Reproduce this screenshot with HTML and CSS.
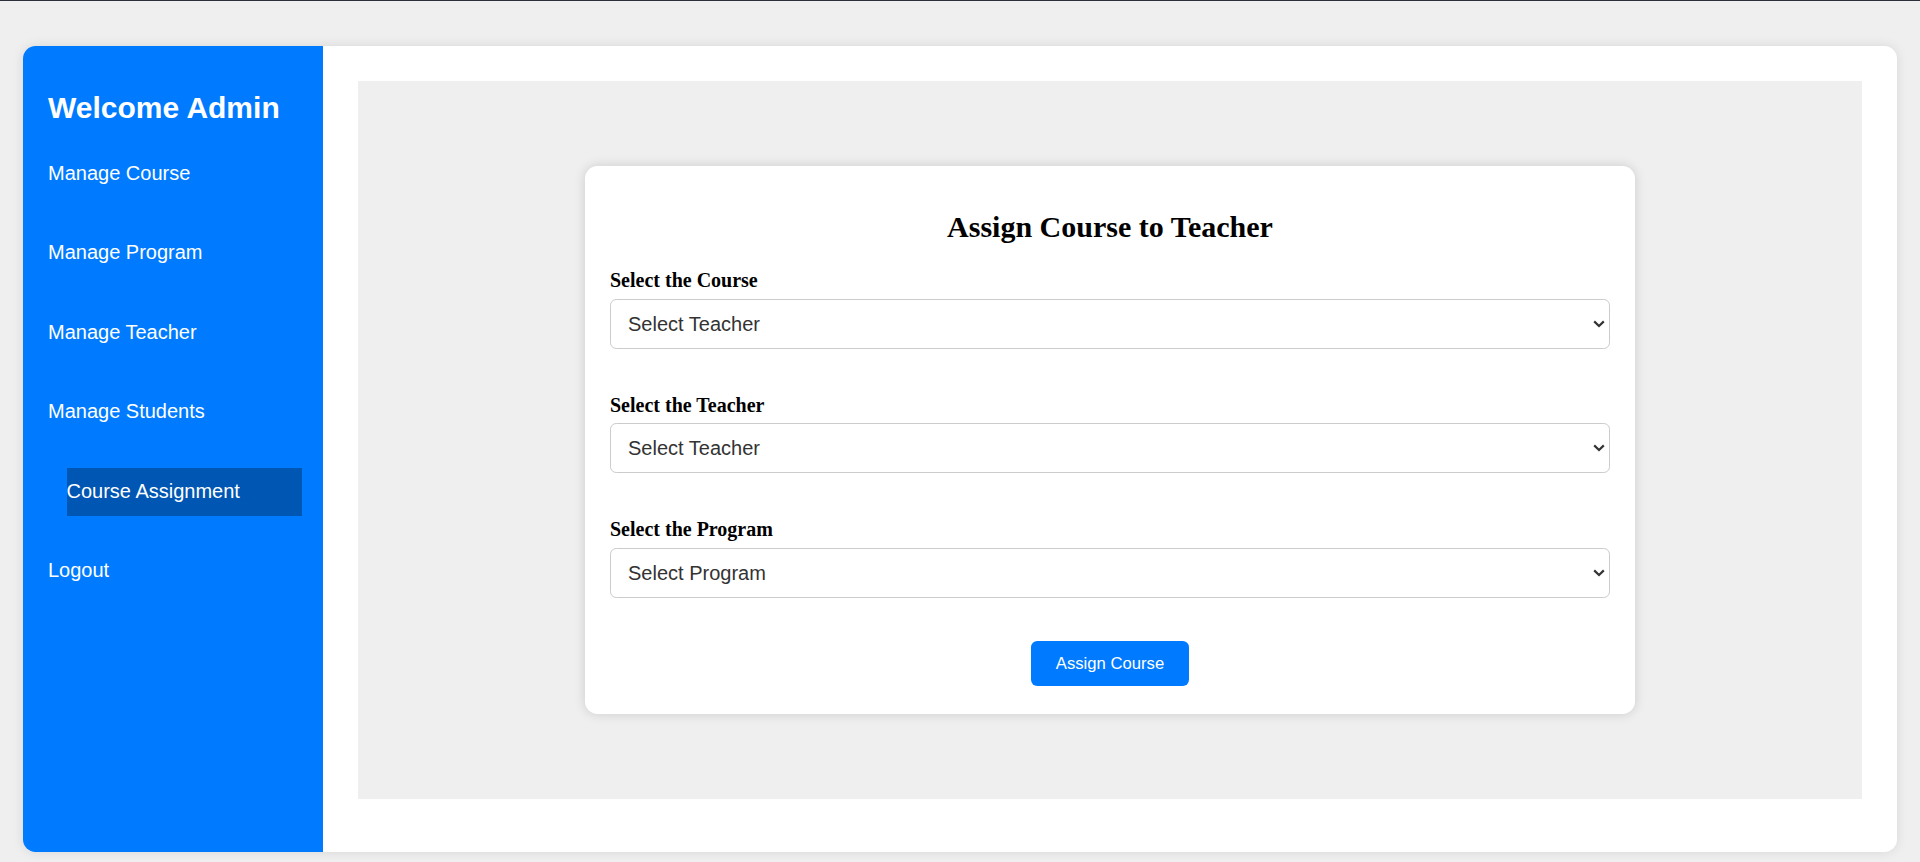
FILE: index.html
```html
<!DOCTYPE html>
<html lang="en">
<head>
<meta charset="utf-8">
<title>Assign Course to Teacher</title>
<link rel="stylesheet" href="styles.css">
</head>
<body>
<div class="topline"></div>
<div class="container">
  <aside class="sidebar">
    <h2 class="welcome">Welcome Admin</h2>
    <ul class="nav">
      <li class="nav-item">Manage Course</li>
      <li class="nav-item">Manage Program</li>
      <li class="nav-item">Manage Teacher</li>
      <li class="nav-item">Manage Students</li>
      <li class="nav-item active">Course Assignment</li>
      <li class="nav-item">Logout</li>
    </ul>
  </aside>
  <main class="main">
    <div class="panel">
      <form class="card">
        <h2 class="card-title">Assign Course to Teacher</h2>
        <div class="group">
          <label class="label">Select the Course</label>
          <div class="field">
            <select class="select"><option>Select Teacher</option></select>
            <svg class="chev" width="12" height="8" viewBox="0 0 12 8"><path d="M1.2 1.4 L6 6 L10.8 1.4" fill="none" stroke="#333" stroke-width="2.2"/></svg>
          </div>
        </div>
        <div class="group">
          <label class="label">Select the Teacher</label>
          <div class="field">
            <select class="select"><option>Select Teacher</option></select>
            <svg class="chev" width="12" height="8" viewBox="0 0 12 8"><path d="M1.2 1.4 L6 6 L10.8 1.4" fill="none" stroke="#333" stroke-width="2.2"/></svg>
          </div>
        </div>
        <div class="group last">
          <label class="label">Select the Program</label>
          <div class="field">
            <select class="select"><option>Select Program</option></select>
            <svg class="chev" width="12" height="8" viewBox="0 0 12 8"><path d="M1.2 1.4 L6 6 L10.8 1.4" fill="none" stroke="#333" stroke-width="2.2"/></svg>
          </div>
        </div>
        <div class="actions">
          <button type="button" class="btn">Assign Course</button>
        </div>
      </form>
    </div>
  </main>
</div>
</body>
</html>
```
FILE: styles.css
```css
* { box-sizing: border-box; }
html, body {
  margin: 0;
  padding: 0;
  background: #efefef;
  height: 100%;
}
body { overflow: hidden; }
.topline {
  height: 1px;
  background: #2b2f3a;
}
.container {
  margin: 45px 23px 0;
  height: 806px;
  display: flex;
  background: #ffffff;
  border-radius: 12.5px;
  overflow: hidden;
  box-shadow: 0 0 12px rgba(0, 0, 0, 0.1);
}
.sidebar {
  width: 300px;
  flex-shrink: 0;
  background: #007bff;
  color: #ffffff;
  padding: 45px 25px 0;
  font-family: "Liberation Sans", Arial, sans-serif;
}
.welcome {
  margin: 0 0 24px;
  font-size: 30px;
  line-height: 34.5px;
  font-weight: bold;
}
.nav {
  list-style: none;
  margin: 0;
  padding: 0;
  display: flex;
  flex-direction: column;
  gap: 31.6px;
}
.nav-item {
  font-size: 20px;
  line-height: 23px;
  padding: 12px 0 13px;
}
.nav-item.active {
  background: #0056b3;
  margin-left: 18.5px;
  width: 235px;
}
.main {
  flex: 1;
  padding: 35px 35px 53px;
  display: flex;
}
.panel {
  flex: 1;
  background: #efefef;
  display: flex;
  align-items: center;
  justify-content: center;
}
.card {
  width: 1050px;
  background: #ffffff;
  border-radius: 12.5px;
  box-shadow: 0 0 12px rgba(0, 0, 0, 0.15);
  padding: 44px 25px 28px;
  margin: 0;
}
.card-title {
  margin: 0 0 25px;
  text-align: center;
  font-family: "Liberation Serif", "Times New Roman", serif;
  font-size: 30px;
  line-height: 34.5px;
  font-weight: bold;
  color: #000;
}
.group { margin-bottom: 45px; }
.group.last { margin-bottom: 0; }
.label {
  display: block;
  margin-bottom: 6.5px;
  font-family: "Liberation Serif", "Times New Roman", serif;
  font-size: 20px;
  line-height: 23px;
  font-weight: bold;
  color: #000;
}
.field { position: relative; }
.select {
  display: block;
  width: 100%;
  height: 50px;
  padding: 0 30px 0 17px;
  border: 1px solid #cccccc;
  border-radius: 6.25px;
  background: #ffffff;
  font-family: "Liberation Sans", Arial, sans-serif;
  font-size: 20px;
  color: #333333;
  -webkit-appearance: none;
  appearance: none;
  outline: none;
}
.chev {
  position: absolute;
  right: 5.5px;
  top: 21px;
  pointer-events: none;
}
.actions {
  margin-top: 43.5px;
  text-align: center;
  line-height: 0;
}
.btn {
  height: 45px;
  padding: 0 25px;
  border: none;
  border-radius: 6.25px;
  background: #007bff;
  color: #ffffff;
  font-family: "Liberation Sans", Arial, sans-serif;
  font-size: 16.67px;
  line-height: 19px;
  cursor: pointer;
}
```
